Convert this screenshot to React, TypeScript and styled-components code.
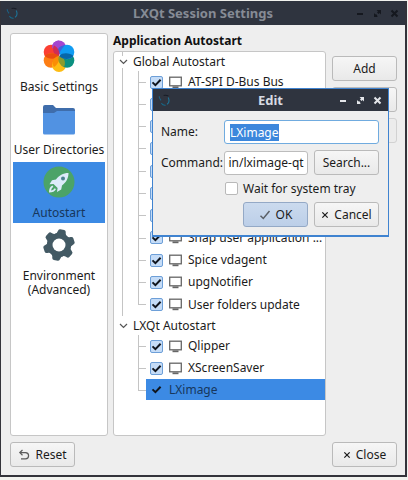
import React, { useEffect, useRef, useState } from "react";
import styled, { createGlobalStyle, css } from "styled-components";

const color = {
  bar: "#2f343f",
  panel: "#eeeeee",
  line: "#c6c6c6",
  branch: "#c4c4c4",
  accent: "#3c8ae4",
  text: "#1b1b1b",
};

const GlobalStyle = createGlobalStyle`
  *, *::before, *::after { box-sizing: border-box; }
  body {
    margin: 0;
    font-family: "Noto Sans", "Open Sans", sans-serif;
    font-size: 12px;
    line-height: 16px;
    color: ${color.text};
  }
  button, input { font: inherit; color: inherit; margin: 0; }
  svg { display: block; flex: none; }
  ul { list-style: none; margin: 0; padding: 0; }
`;

const Desktop = styled.div`
  min-height: 100vh;
  padding: 1px 1px 3px 0;
  background: #f1f2ee;
  display: flex;
`;

const Window = styled.main`
  position: relative;
  flex: 1;
  display: flex;
  flex-direction: column;
  border: solid #33333a;
  border-width: 0 2px 2px 1px;
  background: ${color.panel};
`;

const TitleBar = styled.header<{ $active?: boolean }>`
  display: grid;
  grid-template-columns: 48px 1fr 48px;
  align-items: center;
  height: ${(p) => (p.$active ? 22 : 24)}px;
  padding: 0 5px;
  background: ${color.bar};
  color: ${(p) => (p.$active ? "#d6dae2" : "#868b95")};
`;

const Title = styled.h1`
  margin: 0;
  font-size: 13px;
  line-height: 16px;
  font-weight: 700;
  text-align: center;
  white-space: nowrap;
`;

const WindowButtons = styled.div<{ $active?: boolean }>`
  display: flex;
  justify-content: flex-end;
  gap: 5px;
  color: ${(p) => (p.$active ? "#e4e6ea" : "#15181f")};
`;

const WindowButton = styled.button`
  display: grid;
  place-items: center;
  width: 12px;
  height: 16px;
  padding: 0;
  border: 0;
  background: none;
`;

const Content = styled.div`
  flex: 1;
  display: grid;
  grid-template-columns: 98px minmax(0, 1fr);
  gap: 5px;
  padding: 8px 8px 6px 9px;
`;

const frame = css`
  background: #ffffff;
  border: 1px solid ${color.line};
  border-radius: 3px;
`;

const Sidebar = styled.nav`
  ${frame}
  display: flex;
  flex-direction: column;
  gap: 2px;
  padding: 2px;
`;

const SideItem = styled.a<{ $selected?: boolean }>`
  display: flex;
  flex-direction: column;
  align-items: center;
  gap: 8px;
  padding: 4px 0 2px;
  text-align: center;
  text-decoration: none;
  line-height: 14px;
  white-space: nowrap;
  min-height: 61px;
  color: ${(p) => (p.$selected ? "#17375c" : color.text)};
  background: ${(p) => (p.$selected ? color.accent : "transparent")};
`;

const Page = styled.section`
  display: flex;
  flex-direction: column;
  gap: 2px;
`;

const Heading = styled.h2`
  margin: 0;
  font-size: 12px;
  line-height: 16px;
  font-weight: 700;
  color: #111;
`;

const PageBody = styled.div`
  flex: 1;
  display: grid;
  grid-template-columns: minmax(0, 1fr) 65px;
  gap: 6px;
`;

const TreeFrame = styled.div`
  ${frame}
`;

const Group = styled.li<{ $last?: boolean }>`
  background: ${(p) =>
    p.$last
      ? "none"
      : `linear-gradient(${color.branch}, ${color.branch}) 8px 0 / 1px 100% no-repeat`};
`;

const GroupRow = styled.div`
  display: flex;
  align-items: center;
  gap: 4px;
  height: 19px;
  padding-left: 3px;
`;

const Toggle = styled.button`
  display: grid;
  place-items: center;
  width: 12px;
  height: 12px;
  padding: 0;
  border: 0;
  background: #fff;
`;

const Entries = styled.ul<{ $height?: number }>`
  display: grid;
  grid-auto-rows: 1fr;
  min-height: ${(p) => p.$height ?? 0}px;
  padding-left: 24px;
`;

const Entry = styled.li`
  display: grid;
  grid-template-columns: 8px minmax(0, 1fr);
  min-height: 22px;
`;

const Branch = styled.span<{ $last: boolean }>`
  background:
    linear-gradient(${color.branch}, ${color.branch}) 0 0 / 1px ${(p) => (p.$last ? "50%" : "100%")} no-repeat,
    linear-gradient(${color.branch}, ${color.branch}) 0 50% / 8px 1px no-repeat;
`;

const EntryLabel = styled.label<{ $selected?: boolean }>`
  display: flex;
  align-items: center;
  gap: 6px;
  height: ${(p) => (p.$selected ? 21 : 22)}px;
  padding-left: 4px;
  background: ${(p) => (p.$selected ? color.accent : "transparent")};
  color: ${(p) => (p.$selected ? "#17375c" : color.text)};
`;

const EntryText = styled.span`
  white-space: nowrap;
`;

const TickCell = styled.span`
  display: inline-grid;
  place-items: center;
  flex: none;
  > * {
    grid-area: 1 / 1;
  }
  > svg {
    pointer-events: none;
    visibility: hidden;
  }
  > input:checked + svg {
    visibility: visible;
  }
`;

const TickBox = styled.input<{ $plain?: boolean }>`
  appearance: none;
  width: 13px;
  height: 13px;
  border: 1px solid #b9b9b9;
  border-radius: 2px;
  background: #fff;
  &:checked {
    border-color: ${(p) => (p.$plain ? "transparent" : "#6d9fd8")};
    background: ${(p) => (p.$plain ? "transparent" : "#c5dcf7")};
  }
`;

const ButtonColumn = styled.div`
  display: flex;
  flex-direction: column;
  gap: 6px;
  padding-top: 5px;
`;

const PushButton = styled.button<{ $primary?: boolean }>`
  display: flex;
  align-items: center;
  justify-content: center;
  gap: 5px;
  height: 25px;
  min-width: 65px;
  padding: 0 4px;
  white-space: nowrap;
  border: 1px solid ${(p) => (p.$primary ? "#94a9c6" : "#bababa")};
  border-radius: 3px;
  background: ${(p) =>
    p.$primary ? "linear-gradient(#cbdaee, #bccfe8)" : "linear-gradient(#f6f6f6, #e9e9e9)"};
  &:disabled {
    border-color: #d2d2d2;
    color: #a0a0a0;
    background: #ececec;
  }
`;

const Footer = styled.footer`
  display: flex;
  justify-content: space-between;
  padding: 0 8px 8px 9px;
`;

const Dialog = styled.section`
  position: absolute;
  top: 87px;
  left: 151px;
  right: 16px;
  border: 1px solid #3f83d0;
  border-bottom-width: 2px;
  background: ${color.panel};
`;

const Form = styled.form`
  display: grid;
  grid-template-columns: 57px minmax(0, 1fr) 65px;
  align-items: center;
  column-gap: 6px;
  row-gap: 6px;
  padding: 9px 9px 8px 8px;
`;

const FieldLabel = styled.label`
  white-space: nowrap;
`;

const TextBox = styled.input<{ $wide?: boolean }>`
  grid-column: ${(p) => (p.$wide ? "span 2" : "auto")};
  width: 100%;
  height: 24px;
  padding: 0 ${(p) => (p.$wide ? 5 : 3)}px;
  border: 1px solid #bcbcbc;
  border-radius: 3px;
  background: #fff;
  outline: none;
  &:focus {
    border-color: #70abdf;
  }
  &::selection {
    background: #3c87dc;
    color: #fff;
  }
`;

const WaitLabel = styled.label`
  grid-column: 2 / -1;
  display: flex;
  align-items: center;
  gap: 5px;
  height: 15px;
  padding-left: 1px;
  white-space: nowrap;
`;

const DialogButtons = styled.div`
  grid-column: 1 / -1;
  display: grid;
  grid-template-columns: 65px 65px;
  justify-content: end;
  gap: 6px;
`;

const SwirlIcon = () => (
  <svg width="13" height="13" viewBox="0 0 13 13" fill="none" strokeWidth="1.1">
    <path d="M1.2 2.2C1 4 2 5.2 3 6.4" stroke="#1c6184" />
    <path d="M3.4 9.2C4.4 10.8 6 11.4 7.6 11.2" stroke="#156a8b" />
    <path d="M9 10.4C11 9 11.4 6 10.2 3.4" stroke="#1d7397" />
    <path d="M5.6 1.6C7 1 9 1.2 10.4 2" stroke="#191d27" />
  </svg>
);

const MinimizeIcon = () => (
  <svg width="9" height="9" viewBox="0 0 9 9">
    <rect x="1" y="4" width="6" height="2" fill="currentColor" />
  </svg>
);

const MaximizeIcon = () => (
  <svg width="9" height="9" viewBox="0 0 9 9" fill="currentColor">
    <path d="M3.6 1H8v4.4L6.6 4 5.6 5 4 3.400 5 2.400ZM1 4l1.400 1.400L3 5 4.400 6.400 3.800 7 5 8H1Z" />
  </svg>
);

const CrossIcon = ({ size = 9, width = 2 }: { size?: number; width?: number }) => (
  <svg width={size} height={size} viewBox="0 0 9 9" fill="none" stroke="currentColor" strokeWidth={width}>
    <path d="M1.5 1.5 7.5 7.5M7.5 1.5 1.5 7.5" />
  </svg>
);

const TickIcon = () => (
  <svg width="11" height="11" viewBox="0 0 11 11" fill="none" stroke="#10151d" strokeWidth="2">
    <path d="M1.5 5.4 4.4 8.2 9.6 2.8" />
  </svg>
);

const OkIcon = () => (
  <svg width="12" height="12" viewBox="0 0 12 12" fill="none" stroke="#5a5f66" strokeWidth="1.5">
    <path d="M1.5 6.8 4.3 9.5 10.5 2" />
  </svg>
);

const UndoIcon = () => (
  <svg width="12" height="12" viewBox="0 0 12 12" fill="none" stroke="#5c5c5c" strokeWidth="1.2">
    <path d="M4.5 1 1.8 3.6 4.5 6.2M2 3.6H7.5A3 3 0 0 1 7.5 9.8H3" />
  </svg>
);

const ChevronIcon = () => (
  <svg width="9" height="6" viewBox="0 0 9 6" fill="none" stroke="#555" strokeWidth="1.2">
    <path d="M1 1 4.5 4.5 8 1" />
  </svg>
);

const MonitorIcon = () => (
  <svg width="13" height="13" viewBox="0 0 13 13" fill="none" stroke="#666">
    <rect x="0.7" y="1.2" width="11.6" height="8.6" strokeWidth="1.3" />
    <path d="M3.5 11.3h6" strokeWidth="1.8" />
  </svg>
);

const FlowerIcon = () => (
  <svg width="32" height="32" viewBox="0 0 32 32">
    <circle cx="16" cy="7.5" r="7" fill="#a346cf" />
    <circle cx="8" cy="12" r="7.3" fill="#fb3f32" />
    <circle cx="8" cy="20.5" r="7.3" fill="#fd7e14" />
    <circle cx="16" cy="25" r="7" fill="#fdbc13" />
    <circle cx="24" cy="20.5" r="7.3" fill="#0b9080" />
    <circle cx="24" cy="12" r="7.3" fill="#109cf2" />
    <path d="M16 16V.5a7 7 0 0 0-7 7Z" fill="#a346cf" />
    <path d="M16 16C12 10 16 6 22 5c-3 4-6 7-6 11Z" fill="#3f62da" />
    <path d="M16 16C10 15 9 9 11 5.5c4 2 6 6 5 10.5Z" fill="#cf2d55" />
    <path d="M16 16C12 20 5 19 1.5 16 5 12.5 12 12 16 16Z" fill="#ea4d10" />
    <path d="M16 16C17 21 14 25 11 27 8 23 10 17 16 16Z" fill="#fa8d05" />
    <path d="M16 16C22 17 23 23 21 27 17 25 14 21 16 16Z" fill="#8a9b2c" />
    <path d="M16 16C20 12 27 13 30.5 16 27 20 20 20 16 16Z" fill="#0767a8" />
  </svg>
);

const FolderIcon = () => (
  <svg width="32" height="32" viewBox="0 0 32 32">
    <path d="M0 4a2 2 0 0 1 2-2h8l3 3h17a2 2 0 0 1 2 2v10H0Z" fill="#3f6dab" />
    <path d="M0 10h11l3-2h18v22a1.500 1.500 0 0 1-1.500 1.500h-29A1.500 1.500 0 0 1 0 30Z" fill="#5192e2" />
  </svg>
);

const RocketIcon = () => (
  <svg width="32" height="32" viewBox="0 0 32 32">
    <circle cx="16" cy="16" r="15.5" fill="#4ba368" />
    <path
      d="M25.500 7C20 7 16 9.500 13 13.500l-4 .8-2.500 4 4-.4 4.100 4.200-.6 4 4.200-2.700.8-4C23 16.500 25.500 12.500 25.500 7Z"
      fill="#dcebfa"
    />
    <path d="M9.500 19.500C7 20.500 6 23 6 26.500c3.500 0 6-1 7-3.500l-1.500-.8c-.7 1.400-1.800 2-3.300 2.200.2-1.600.9-2.600 2.200-3.300Z" fill="#dcebfa" />
    <circle cx="20" cy="12.500" r="2" fill="#4b8290" />
  </svg>
);

const GearIcon = () => (
  <svg width="32" height="32" viewBox="0 0 32 32">
    <g fill="#435a64" transform="rotate(12 16 16)">
      <circle cx="16" cy="16" r="12" />
      {[0, 60, 120, 180, 240, 300].map((a) => (
        <path
          key={a}
          transform={`rotate(${a} 16 16)`}
          d="M9.500 6.500Q11.800 5 12 2.500Q12.200.3 14 .3h4Q19.800.3 20 2.500Q20.200 5 22.500 6.500Z"
        />
      ))}
    </g>
    <circle cx="16" cy="16" r="6.500" fill="#fff" />
  </svg>
);

function Bar({ title, active }: { title: string; active?: boolean }) {
  return (
    <TitleBar $active={active}>
      <SwirlIcon />
      <Title>{title}</Title>
      <WindowButtons $active={active}>
        <WindowButton type="button" aria-label="Minimize"><MinimizeIcon /></WindowButton>
        <WindowButton type="button" aria-label="Maximize"><MaximizeIcon /></WindowButton>
        <WindowButton type="button" aria-label="Close window"><CrossIcon /></WindowButton>
      </WindowButtons>
    </TitleBar>
  );
}

function Tick({ checked, plain }: { checked?: boolean; plain?: boolean }) {
  return (
    <TickCell>
      <TickBox type="checkbox" defaultChecked={checked} $plain={plain} />
      <TickIcon />
    </TickCell>
  );
}

type Item = { name: string; selected?: boolean };

const globalItems: Item[] = [
  { name: "AT-SPI D-Bus Bus" },
  { name: "Bluetooth" },
  { name: "Discover" },
  { name: "Geoclue" },
  { name: "Network" },
  { name: "nm-tray" },
  { name: "Power" },
  { name: "Snap user application ..." },
  { name: "Spice vdagent" },
  { name: "upgNotifier" },
  { name: "User folders update" },
];

const sessionItems: Item[] = [
  { name: "Qlipper" },
  { name: "XScreenSaver" },
  { name: "LXimage", selected: true },
];

function TreeGroup(props: { name: string; items: Item[]; last?: boolean; height?: number }) {
  return (
    <Group $last={props.last}>
      <GroupRow>
        <Toggle type="button" aria-label={`Collapse ${props.name}`}><ChevronIcon /></Toggle>
        {props.name}
      </GroupRow>
      <Entries $height={props.height}>
        {props.items.map((item, i) => (
          <Entry key={item.name}>
            <Branch $last={i === props.items.length - 1} />
            <EntryLabel $selected={item.selected}>
              <Tick checked plain={item.selected} />
              {!item.selected && <MonitorIcon />}
              <EntryText>{item.name}</EntryText>
            </EntryLabel>
          </Entry>
        ))}
      </Entries>
    </Group>
  );
}

function EditDialog() {
  const nameRef = useRef<HTMLInputElement>(null);
  const commandRef = useRef<HTMLInputElement>(null);
  const [name, setName] = useState("LXimage");
  const [command, setCommand] = useState("/usr/bin/lximage-qt");

  useEffect(() => {
    if (commandRef.current) commandRef.current.scrollLeft = commandRef.current.scrollWidth;
    nameRef.current?.focus();
    nameRef.current?.select();
  }, []);

  return (
    <Dialog role="dialog" aria-label="Edit">
      <Bar title="Edit" active />
      <Form onSubmit={(e) => e.preventDefault()}>
        <FieldLabel htmlFor="name">Name:</FieldLabel>
        <TextBox id="name" $wide ref={nameRef} value={name} onChange={(e) => setName(e.target.value)} />
        <FieldLabel htmlFor="command">Command:</FieldLabel>
        <TextBox id="command" ref={commandRef} value={command} onChange={(e) => setCommand(e.target.value)} />
        <PushButton type="button">Search...</PushButton>
        <WaitLabel>
          <Tick />
          Wait for system tray
        </WaitLabel>
        <DialogButtons>
          <PushButton type="submit" $primary><OkIcon />OK</PushButton>
          <PushButton type="button"><CrossIcon size={8} width={1.4} />Cancel</PushButton>
        </DialogButtons>
      </Form>
    </Dialog>
  );
}

export default function App() {
  return (
    <>
      <GlobalStyle />
      <Desktop>
        <Window>
          <Bar title="LXQt Session Settings" />
          <Content>
            <Sidebar>
              <SideItem href="#basic"><FlowerIcon />Basic Settings</SideItem>
              <SideItem href="#directories"><FolderIcon />User Directories</SideItem>
              <SideItem href="#autostart" $selected><RocketIcon />Autostart</SideItem>
              <SideItem href="#environment"><GearIcon /><span>Environment<br />(Advanced)</span></SideItem>
            </Sidebar>
            <Page>
              <Heading>Application Autostart</Heading>
              <PageBody>
                <TreeFrame>
                  <ul>
                    <TreeGroup name="Global Autostart" items={globalItems} height={245} />
                    <TreeGroup name="LXQt Autostart" items={sessionItems} last />
                  </ul>
                </TreeFrame>
                <ButtonColumn>
                  <PushButton type="button">Add</PushButton>
                  <PushButton type="button">Edit</PushButton>
                  <PushButton type="button" disabled>Remove</PushButton>
                </ButtonColumn>
              </PageBody>
            </Page>
          </Content>
          <Footer>
            <PushButton type="button"><UndoIcon />Reset</PushButton>
            <PushButton type="button"><CrossIcon size={8} width={1.4} />Close</PushButton>
          </Footer>
          <EditDialog />
        </Window>
      </Desktop>
    </>
  );
}
